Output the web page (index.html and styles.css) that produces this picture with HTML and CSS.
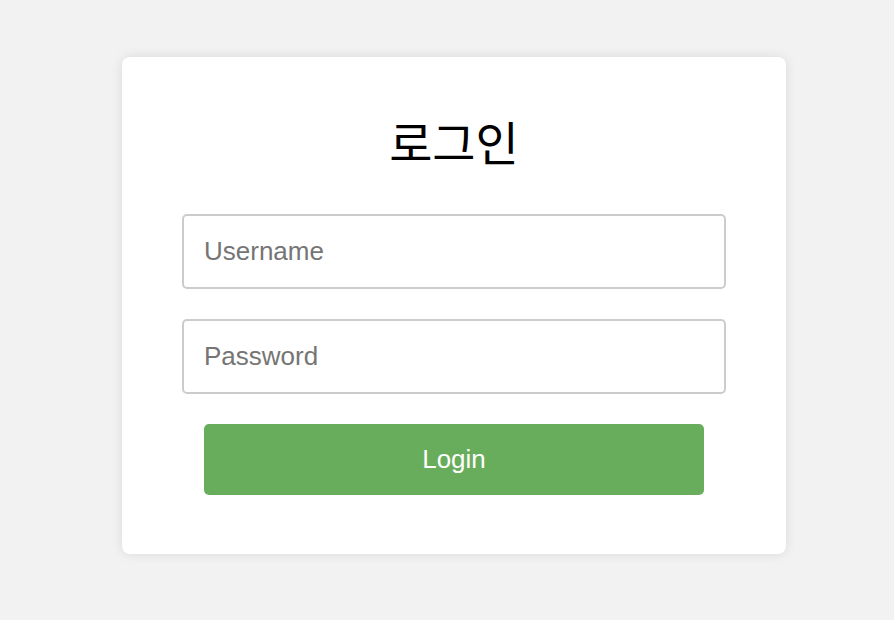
FILE: index.html
```html
<!DOCTYPE html>
<html lang="ko">
<head>
<meta charset="utf-8">
<title>로그인</title>
<link rel="stylesheet" href="styles.css">
</head>
<body>
<main class="page">
  <form class="card">
    <h1 class="title">로그인</h1>
    <input class="field" type="text" placeholder="Username">
    <input class="field" type="password" placeholder="Password">
    <button class="btn" type="button">Login</button>
  </form>
</main>
</body>
</html>
```
FILE: styles.css
```css
* { box-sizing: border-box; }
html, body {
  margin: 0;
  padding: 0;
  background: #f2f2f2;
  font-family: "Liberation Sans", Arial, sans-serif;
}
.page {
  width: 894px;
  height: 620px;
  padding-top: 57px;
  display: flex;
  justify-content: center;
  align-items: flex-start;
}
.card {
  width: 664px;
  height: 497px;
  margin-left: 14px;
  background: #fff;
  border-radius: 8px;
  box-shadow: 0 0 12px rgba(0, 0, 0, 0.1);
  padding: 57px 60px 0;
  display: flex;
  flex-direction: column;
  align-items: center;
}
.title {
  margin: 0 0 46px;
  height: 54px;
  line-height: 54px;
  font-family: "Noto Sans CJK KR", sans-serif;
  font-weight: 400;
  font-size: 47px;
  color: #000;
  text-align: center;
  white-space: nowrap;
}
.field {
  width: 544px;
  height: 75px;
  flex: 0 0 75px;
  border: 2px solid #cccccc;
  border-radius: 5px;
  padding: 0 20px;
  font-family: "Liberation Sans", Arial, sans-serif;
  font-size: 26px;
  color: #333;
  background: #fff;
  outline: none;
  margin: 0 0 30px;
}
.field::placeholder { color: #757575; }
.btn {
  width: 500px;
  height: 71px;
  flex: 0 0 71px;
  border: none;
  border-radius: 5px;
  background: #68ad5c;
  color: #fff;
  font-family: "Liberation Sans", Arial, sans-serif;
  font-size: 26px;
  cursor: pointer;
}
```
